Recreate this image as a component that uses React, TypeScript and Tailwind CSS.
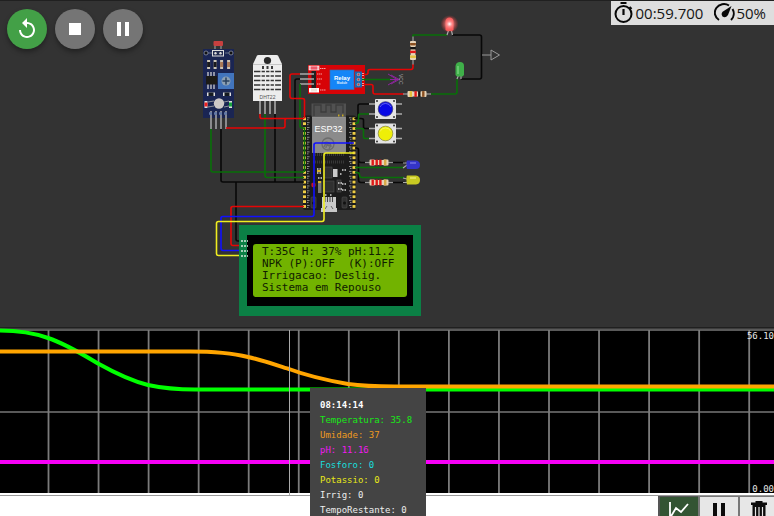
import React from "react";

const lcdLines = [
  "T:35C H: 37% pH:11.2",
  "NPK (P):OFF  (K):OFF",
  "Irrigacao: Deslig.",
  "Sistema em Repouso",
];

const readings = [
  { label: "Temperatura", value: "35.8", color: "text-[#18e818]" },
  { label: "Umidade", value: "37", color: "text-[#ee9a20]" },
  { label: "pH", value: "11.16", color: "text-[#f018f0]" },
  { label: "Fosforo", value: "0", color: "text-[#18dede]" },
  { label: "Potassio", value: "0", color: "text-[#e8e818]" },
  { label: "Irrig", value: "0", color: "text-[#eeeeee]" },
  { label: "TempoRestante", value: "0", color: "text-[#eeeeee]" },
];

const RED = "#e60505";
const GREEN = "#087008";
const BLACK = "#080808";
const LEAD = "#969696";

function Wire({ d, color }: { d: string; color: string }) {
  return <path d={d} stroke={color} strokeWidth="1.6" fill="none" strokeLinejoin="round" />;
}

function Resistor({ x, y, rotate = 0, bands }: { x: number; y: number; rotate?: number; bands: string[] }) {
  return (
    <g transform={`translate(${x} ${y}) rotate(${rotate})`}>
      <path d="M-14 0H14" stroke={LEAD} strokeWidth="1.3" />
      <path d="M-9.5 -2q0 -1 1 -1h3.5l1 .6h8l1 -.6h3.5q1 0 1 1v4q0 1 -1 1h-3.5l-1 -.6h-8l-1 .6h-3.5q-1 0 -1 -1z" fill="#e8d4b8" />
      {bands.map((c, i) => (
        <rect key={i} x={[-7.5, -3.5, 0.2, 5][i]} y={-2.9} width="2.4" height="5.8" fill={c} />
      ))}
    </g>
  );
}

function PushButton({ y, color, shade }: { y: number; color: string; shade: string }) {
  return (
    <g>
      <path d={`M369 ${y - 5}H375M369 ${y + 5}H375M396 ${y - 5}H402M396 ${y + 5}H402`} stroke="#aaa" strokeWidth="1.3" />
      <rect x="375" y={y - 10} width="21" height="20" rx="1" fill="#e4e4e4" />
      {[377, 394].map((cx) =>
        [y - 8, y + 8].map((cy) => <circle key={`${cx}-${cy}`} cx={cx} cy={cy} r="1" fill="#333" />)
      )}
      <circle cx="385.5" cy={y} r="7.3" fill={color} stroke={shade} strokeWidth="0.8" />
      <path d={`M380 ${y - 2}a6 6 0 0 1 11 0`} stroke="#fff" strokeOpacity="0.35" fill="none" />
    </g>
  );
}

function LightSensor() {
  return (
    <g>
      <path d="M215 45V52M221 45V52" stroke={LEAD} strokeWidth="1.2" />
      <rect x="213.5" y="41" width="9.5" height="5" rx="1" fill="#c8403f" />
      <rect x="203" y="49" width="31" height="69" fill="#1a2553" />
      <circle cx="206" cy="53" r="2" fill="#111" stroke="#8b92a4" strokeWidth="0.8" />
      <circle cx="231" cy="53" r="2" fill="#111" stroke="#8b92a4" strokeWidth="0.8" />
      <path d="M208 53H212M225 53H229" stroke="#8b92a4" strokeWidth="0.7" />
      <rect x="212.5" y="50.5" width="11" height="5.5" fill="#222b50" stroke="#ddd" />
      <circle cx="215.5" cy="53.3" r="1.2" fill="#ddd" />
      <circle cx="220.5" cy="53.3" r="1.2" fill="#ddd" />
      {[208.5, 215, 221.5, 228.5].map((x, i) => (
        <g key={x}>
          <rect x={x - 1.4} y="60" width="3" height="9" fill="#ccc5b5" />
          <rect x={x - 1.4} y="62" width="3" height="5" fill={i < 2 ? "#191a1d" : "#a87856"} />
        </g>
      ))}
      <path d="M208 72V89M211 72V89M214 72V89" stroke="#ddd" strokeWidth="1.2" />
      <rect x="206" y="76" width="11" height="8.5" fill="#1c1b17" />
      <rect x="218" y="73" width="16" height="16" fill="#4275bd" />
      <circle cx="226" cy="81" r="4.5" fill="#8ca0b4" />
      <path d="M226 77.5V84.5M222.5 81H229.5" stroke="#28405f" strokeWidth="1.5" />
      {[211, 227].map((x) => (
        <g key={x}>
          <rect x={x - 4} y="92.5" width="8" height="3.5" fill="#ddd" />
          <rect x={x - 2.5} y="92.5" width="5" height="3.5" fill="#151a20" />
        </g>
      ))}
      <rect x="204.5" y="101" width="3" height="7" fill="#ddd" />
      <rect x="204.5" y="102.5" width="3" height="4" fill="#ee2020" />
      <rect x="229" y="101" width="3" height="7" fill="#ddd" />
      <rect x="229" y="102.5" width="3" height="4" fill="#18a440" />
      <path d="M208 102l6-1M208 107l6-1M224 102l5-1M224 107l5-1" stroke="#aaa" strokeWidth="0.8" />
      <circle cx="219" cy="103.5" r="5.2" fill="#cdc8c7" />
      <path d="M211 111V129M216 111V129M221 111V129M226 111V129" stroke="#9a9a9d" strokeWidth="1.7" />
      <path d="M209 113.5H228" stroke="#6278a8" strokeWidth="2.5" strokeDasharray="3 2" />
    </g>
  );
}

function HumiditySensor() {
  return (
    <g>
      <path d="M260 101V114M265 101V114M270 101V114M275 101V114" stroke="#a2a2a2" strokeWidth="1.7" />
      <path d="M253 64L257 55.500Q257.500 55 258.500 55H276.500Q277.500 55 278 55.500L282 64V101H253Z" fill="#ededed" />
      <path d="M253 64.500H282" stroke="#c5c5c5" />
      <circle cx="267.500" cy="60.500" r="3.600" fill="#292929" />
      <path d="M263 66V69M267.500 66V69M272 66V69" stroke="#3b3b3b" strokeWidth="2" />
      <path
        d="M254 71.500H281M254 76H281M254 80.500H281M254 85H281M254 89.500H281"
        stroke="#333"
        strokeWidth="1.700"
      />
      <path d="M261 70V92M265.500 70V92M270 70V92M274.500 70V92" stroke="#ededed" strokeWidth="1.200" />
      <text x="267.500" y="99" fontSize="5" textAnchor="middle" fill="#555">DHT22</text>
    </g>
  );
}

function RelayModule() {
  return (
    <g>
      <rect x="308" y="65" width="57" height="29" fill="#d70307" />
      <rect x="309" y="66" width="10" height="4" fill="#f3a8af" stroke="#fff" strokeWidth="0.6" />
      <rect x="311" y="66.500" width="6" height="3" fill="#ec596a" />
      <rect x="309" y="88" width="10" height="4.500" fill="#fff" />
      <rect x="311" y="88.500" width="6" height="3" fill="#efe5dc" />
      <path d="M320 68.500H326M320 90H326M317 74H322M317 79H322M317 84H321" stroke="#f5a0a0" strokeDasharray="1.500 .5" />
      <rect x="311.500" y="71" width="4.500" height="17" fill="#202020" />
      <path d="M300 74H314M300 79H314M300 84H314" stroke="#aaa" strokeWidth="1.500" />
      <rect x="330" y="70" width="24" height="19.500" fill="#1485f7" stroke="#4569a0" strokeWidth="0.700" />
      <text x="342" y="80" fontSize="6" fontWeight="bold" textAnchor="middle" fill="#fff">Relay</text>
      <text x="342" y="84" fontSize="3" fontWeight="bold" textAnchor="middle" fill="#e0efff">Module</text>
      <rect x="355" y="71.500" width="7" height="16" fill="#1c66ad" />
      {[74.5, 79.5, 84.5].map((y) => (
        <g key={y}>
          <circle cx="358.500" cy={y} r="1.800" fill="#8ca8b8" />
          <circle cx="358.500" cy={y} r="0.900" fill="#cb3040" />
          <path d={`M362 ${y - 1}h2M362 ${y + 1}h2`} stroke="#eecccc" strokeWidth="0.800" />
        </g>
      ))}
    </g>
  );
}

function Esp32() {
  const pins = Array.from({ length: 19 }, (_, i) => 118.8 + i * 4.87);
  return (
    <g>
      <rect x="303" y="115.500" width="53" height="94.500" rx="2" fill="#1b1b1b" />
      <rect x="311.500" y="103.500" width="34.500" height="13" fill="#515151" />
      <path d="M314 116V105H321V112H326V105H331V112H336V105H343V113" fill="none" stroke="#3c3c3c" strokeWidth="1.300" />
      <path d="M338 115.500h1.500M342 115.500h1.500" stroke="#c8a820" strokeWidth="2" />
      <rect x="312.500" y="117" width="33" height="35.500" fill="#8b8b8b" stroke="#a0a0a0" strokeWidth="0.700" />
      <text x="328.500" y="132" fontSize="9" textAnchor="middle" fill="#fff">ESP32</text>
      <g fill="none" stroke="#6c6c6c" strokeWidth="1.300">
        <circle cx="328" cy="144" r="6" />
        <path d="M324 143a4.500 4.500 0 0 1 7 4M326 148q0-4 3-2M324 147q1 -5 6-1M329 149l2-4" />
      </g>
      {pins.map((y, i) => (
        <g key={i}>
          <rect x="303" y={y - 1.4} width="3" height="2.800" fill="#efce47" />
          <rect x="352.500" y={y - 1.4} width="3" height="2.800" fill="#efce47" />
          <path d={`M307 ${y - 1}h2.500M307 ${y + 1}h1.500M349 ${y - 1}h2.500M350 ${y + 1}h1.500`} stroke="#9b9b9b" strokeWidth="0.900" />
        </g>
      ))}
      <path d="M313 154.500H345M313 162H345" stroke="#383838" strokeDasharray="1 1" strokeWidth="3" />
      <g fill="#303030" stroke="#505050" strokeWidth="0.600">
        <rect x="324" y="167" width="8" height="11" />
        <rect x="323" y="181" width="11" height="11" />
        <rect x="337" y="180" width="4" height="12" />
        <rect x="311" y="197" width="5" height="11" rx="1" />
        <rect x="342" y="197" width="5" height="11" rx="1" />
      </g>
      <rect x="333" y="169" width="4.500" height="8" fill="#c9c9c9" />
      <rect x="318" y="181" width="3.500" height="12" fill="#777" />
      <path
        d="M317 169h4M317 173h4M318 178h4M342 170h5M340 174h2M338 183h5M338 189h5M342 184h5M342 190h5M325 195h2M330 195h2"
        stroke="#d5d5d5"
        strokeWidth="1.500"
        strokeDasharray="1.500 1"
      />
      <path d="M317 171h4M318 182h3" stroke="#d9b42e" strokeWidth="2" />
      <circle cx="313.500" cy="185" r="2.400" fill="#a31323" />
      <rect x="312.300" y="183" width="2.400" height="4" fill="#d71929" />
      <circle cx="313.500" cy="203" r="1.500" fill="#111" />
      <circle cx="344.500" cy="203" r="1.500" fill="#111" />
      <path d="M322 197H336V208H337V212H321V208H322Z" fill="#c8c8c8" />
      <path d="M325 197V202M327.500 197V202M330 197V202M332.500 197V202" stroke="#444" strokeWidth="1" />
      <path d="M325 209l2-3M333 209l-2-3" stroke="#666" />
    </g>
  );
}

function Circuit() {
  const redBands = ["#e01818", "#e01818", "#e01818", "#d8aa48"];
  const mixedBands = ["#8a4f20", "#141414", "#e01818", "#e2c03c"];
  return (
    <svg
      width="520"
      height="328"
      viewBox="0 0 520 328"
      className="absolute top-0 left-0 font-['Liberation_Sans',sans-serif]"
      role="img"
      aria-label="Circuit diagram"
    >
      <defs>
        <radialGradient id="glow">
          <stop offset="0" stopColor="#fff" />
          <stop offset="0.3" stopColor="#ff9090" stopOpacity="0.9" />
          <stop offset="1" stopColor="#ff3030" stopOpacity="0" />
        </radialGradient>
      </defs>
      <LightSensor />
      <HumiditySensor />
      <RelayModule />
      <Esp32 />

      <Wire color={BLACK} d="M221 129V180Q221 182 223 182H304M275 114V182M300 79H297Q295 79 295 81V182M236 182V239Q236 241 238 241H242" />
      <Wire color={GREEN} d="M211 129V170Q211 172 213 172H304M265 114V175Q265 177.500 267 177.500H304M300 84V126Q300 128 302 128H304.500V172" />
      <Wire color={RED} d="M260 114V117Q260 118.500 262 118.500H304M226 128H283Q285 128 285 126V120Q285 118.500 287 118.500M300 74H292Q290 74 290 76V96Q290 98.500 292 98.500H302Q304.500 98.500 304.500 100V118.500" />
      <Wire color={RED} d="M304 206.500H233Q231 206.500 231 208V243.500Q231 245.500 233 245.500H242" />
      <Wire color="#1010ff" d="M354 143H316Q314 143 314 145V214Q314 216.500 312 216.500H223Q221 216.500 221 218V248Q221 250.500 223 250.500H242" />
      <Wire color="#f0ee20" d="M354 153H326Q324 153 324 155V219Q324 221.500 322 221.500H218.500Q216.500 221.500 216.500 223.500V253.500Q216.500 255.500 218.500 255.500H242" />

      <Wire color={RED} d="M364 74.500H366Q368 74.500 368 72.500V71Q368 69.500 370 69.500H411Q413 69.500 413 67V64M364 84.500H371Q373 84.500 373 86.500V92Q373 94 375 94H404" />
      <Wire color={GREEN} d="M362 79.500H394M413 37V35H447M457 79V92Q457 94 455 94H431" />
      <Wire color={BLACK} d="M452 35H479.500Q481.500 35 481.500 37V77Q481.500 79 479.500 79H461" />
      <Wire color={BLACK} d="M369 104H360Q358 104 358 106V116Q358 118.500 355 118.500H361Q363.500 118.500 363.500 120V126.500Q363.500 128.500 365 128.500H369" />
      <Wire color={GREEN} d="M369 114H360Q358.500 114 358.500 116V121Q358.500 123.500 355 123.500M355 128.500H361Q363.500 128.500 363.500 130V136.500Q363.500 138.500 365 138.500H369" />
      <Wire color={BLACK} d="M355 148H356.500Q358.500 148 358.500 150V180Q358.500 182.500 361 182.500H368M358.500 160Q358.500 162.500 361 162.500H368M390 162.500H405M390 182.500H405" />
      <Wire color={GREEN} d="M355 167.500H404M355 172.500H357Q359.500 172.500 359.500 175Q359.500 177.500 362 177.500H404" />

      <path d="M390 79.500H400M391 75L399 79.500L391 84M388 74L397 79.500L388 85" stroke="#8d269d" strokeWidth="1" fill="none" />
      <text transform="translate(399 74) rotate(90)" fontSize="5" fill="#aaa">VCC</text>
      <path d="M482 55H491M491 50L499.500 55L491 60Z" stroke="#999" strokeWidth="1" fill="none" />

      <Resistor x={413} y={50.5} rotate={90} bands={mixedBands} />
      <Resistor x={417} y={94} rotate={180} bands={mixedBands} />
      <Resistor x={379} y={162.5} bands={redBands} />
      <Resistor x={379} y={182.5} bands={redBands} />
      <PushButton y={109} color="#0808e5" shade="#3b3b75" />
      <PushButton y={133.5} color="#eeee08" shade="#8b8b42" />

      <path d="M449 29L447 35M451 29L452.500 35M459 74L457 79M461 74V79" stroke="#aaa" strokeWidth="1.200" />
      <path d="M445.500 30V21Q446 17.500 449.500 17.500T453.500 21V30L452 31H447Z" fill="#f25b5b" />
      <circle cx="449.500" cy="24" r="9" fill="url(#glow)" />
      <path d="M455.500 75V66Q456 62 460 62T464 66V75L462.500 76.500H457Z" fill="#3faf49" />
      <path d="M458 66V74" stroke="#75cf7b" strokeWidth="1.500" />
      <path d="M403 168l4-3h2M403 163h6M403 178l4 1h2M403 182.500h6" stroke="#aaa" strokeWidth="1.200" fill="none" />
      <path d="M407 160.500H416Q420 161 420 165T416 169H407L406.500 167V162Z" fill="#3434c9" />
      <path d="M410 163H416" stroke="#7070e2" strokeWidth="1.500" />
      <path d="M407 175.500H416Q420 176 420 180T416 184.500H407L406.500 182V177Z" fill="#c9ca22" />
      <path d="M410 178H416" stroke="#e8e96e" strokeWidth="1.500" />
    </svg>
  );
}

function LcdDisplay() {
  return (
    <div className="absolute top-[225px] left-[239px] bg-[#0b8045] px-2 py-[10px]">
      <div className="border-x-[6px] border-y-[9px] border-black bg-black">
        <div className="h-[53px] w-[154px] rounded-[3px] bg-[#72b300] py-[2px] pl-[9px] font-['DejaVu_Sans_Mono',monospace] text-[11px] leading-[12px] whitespace-pre text-[#102000]">
          {lcdLines.map((line) => (
            <div key={line}>{line}</div>
          ))}
        </div>
      </div>
      <svg width="12" height="24" viewBox="0 0 12 24" className="absolute top-[12px] left-0" aria-hidden="true">
        <path d="M2 4H9M2 9H9M2 14H9M2 19H9" stroke="#d5e8dc" strokeWidth="1.5" strokeDasharray="2 1" />
      </svg>
    </div>
  );
}

function Chart() {
  const ticks = Array.from({ length: 15 }, (_, i) => 48.5 + i * 50.05);
  return (
    <section aria-label="Plotter" className="relative h-[168px] shrink-0 bg-black font-['DejaVu_Sans_Mono',monospace] text-[9px] text-[#e8e8e8]">
      <svg className="block h-full w-full" viewBox="0 0 774 168" preserveAspectRatio="none" aria-hidden="true">
        <path d="M0 .5H774" stroke="#3c3c3c" />
        <path d="M0 2H774M0 84H774" stroke="#777" strokeWidth="1.7" />
        {ticks.map((x) => (
          <path key={x} d={`M${x} 2V165`} stroke="#7b7b7b" strokeWidth="1.8" />
        ))}
        <path d="M0 134H774" stroke="#f800f8" strokeWidth="4" />
        <path d="M0 2.500C20 2.500 34 5 48 10C66 16 82 26 98 35.500C115 45 132 53 148 57C162 60 175 61.500 195 61.500H774" stroke="#00ff00" strokeWidth="4" fill="none" />
        <path d="M0 23.500H190C215 23.500 232 25 248 29C262 32 276 37 289 41C305 47 325 52 348 56C362 58 375 58.500 395 58.500H774" stroke="#ffa500" strokeWidth="4" fill="none" />
        <rect y="165" width="774" height="3" fill="#fff" />
        <path d="M0 167.500H774" stroke="#999" />
        <path d="M289.500 2V167" stroke="#aaa" />
      </svg>
      <div className="absolute inset-0 flex flex-col items-end justify-between pt-[3px] pb-px leading-[11px]">
        <span>56.10</span>
        <span>0.00</span>
      </div>
      <div role="tooltip" className="absolute top-[60px] left-[310px] z-10 w-[116px] bg-[#444444] px-[10px] py-[10px] leading-[15px]">
        <div className="font-bold text-white">08:14:14</div>
        {readings.map((r) => (
          <div key={r.label} className={r.color}>
            {r.label}: {r.value}
          </div>
        ))}
      </div>
    </section>
  );
}

const roundButton = "flex size-10 items-center justify-center rounded-full text-white shadow-[0_3px_5px_rgba(0,0,0,0.35)]";
const barButton = "flex h-10 w-10 shrink-0 items-start justify-center border-t border-l-2 pt-1";

export default function App() {
  return (
    <main className="flex h-screen flex-col overflow-hidden bg-white font-['Open_Sans',sans-serif]">
      <section aria-label="Simulation" className="relative min-h-0 flex-1 overflow-hidden border-b border-[#202020] bg-[#333333] shadow-[inset_0_1px_0_#202020]">
        <Circuit />
        <LcdDisplay />
        <div className="relative flex items-start justify-between pt-px">
          <div className="flex gap-2 pt-2 pl-[7px]">
            <button type="button" aria-label="Restart the simulation" className={`${roundButton} bg-[#43a047]`}>
              <svg width="24" height="24" viewBox="0 0 24 24" fill="currentColor" aria-hidden="true">
                <path d="M12 5V1L7 6l5 5V7c3.310 0 6 2.690 6 6s-2.690 6-6 6-6-2.690-6-6H4c0 4.420 3.580 8 8 8s8-3.580 8-8-3.580-8-8-8z" />
              </svg>
            </button>
            <button type="button" aria-label="Stop the simulation" className={`${roundButton} bg-[#757575]`}>
              <svg width="24" height="24" viewBox="0 0 24 24" fill="currentColor" aria-hidden="true">
                <path d="M6 6h12v12H6z" />
              </svg>
            </button>
            <button type="button" aria-label="Pause the simulation" className={`${roundButton} bg-[#757575]`}>
              <svg width="24" height="24" viewBox="0 0 24 24" fill="currentColor" aria-hidden="true">
                <path d="M6 5h4v14H6zM14 5h4v14h-4z" />
              </svg>
            </button>
          </div>
          <div className="flex h-6 items-center bg-[#dedede] pr-2 pl-[3px] text-[15px] leading-6 text-[#151515]">
            <svg width="22" height="24" viewBox="0 0 22 24" fill="none" stroke="#080808" aria-hidden="true">
              <circle cx="9.500" cy="13" r="8" strokeWidth="2" />
              <path d="M6.500 2H12.500M9.500 8V14M15.500 6l2 2" strokeWidth="2.200" />
            </svg>
            <span>00:59.700</span>
            <svg width="22" height="22" viewBox="0 0 22 22" className="ml-[11px]" fill="none" stroke="#080808" aria-hidden="true">
              <path d="M5 18A9 8.500 0 0 1 15 3.500M18.500 7A9 9 0 0 1 17 18" strokeWidth="2" />
              <path d="M17.500 4L14 13Q11.500 16.500 8.500 14.500Q6.500 11.500 9 9.500Z" fill="#080808" stroke="none" />
            </svg>
            <span>50%</span>
          </div>
        </div>
      </section>
      <Chart />
      <div className="flex h-5 shrink-0 justify-end overflow-hidden bg-white">
        <div className="-mr-1 flex">
          <button type="button" aria-label="Show plotter" className={`${barButton} border-[#555555] bg-[#335433] text-white`}>
            <svg width="24" height="24" viewBox="0 0 24 24" fill="none" stroke="currentColor" strokeWidth="1.800" aria-hidden="true">
              <path d="M3 1V20H22M3 17L9 7L14 11L21 3" />
            </svg>
          </button>
          <button type="button" aria-label="Pause plotter" className={`${barButton} border-[#777777] bg-[#e7e7e7]`}>
            <svg width="24" height="24" viewBox="0 0 24 24" fill="#0b0b0b" aria-hidden="true">
              <path d="M6 2h4v18H6zM14 2h4v18h-4z" />
            </svg>
          </button>
          <button type="button" aria-label="Clear plotter" className={`${barButton} border-[#777777] bg-[#e7e7e7]`}>
            <svg width="24" height="24" viewBox="0 0 24 24" fill="none" aria-hidden="true">
              <path d="M8.500 0H15.500V1.500H20V4H4V1.500H8.500ZM5.500 4H18.500V21H5.500Z" fill="#0b0b0b" />
              <path d="M8.500 6V18M12 6V18M15.500 6V18" stroke="#e7e7e7" strokeWidth="1.200" />
            </svg>
          </button>
        </div>
      </div>
    </main>
  );
}
